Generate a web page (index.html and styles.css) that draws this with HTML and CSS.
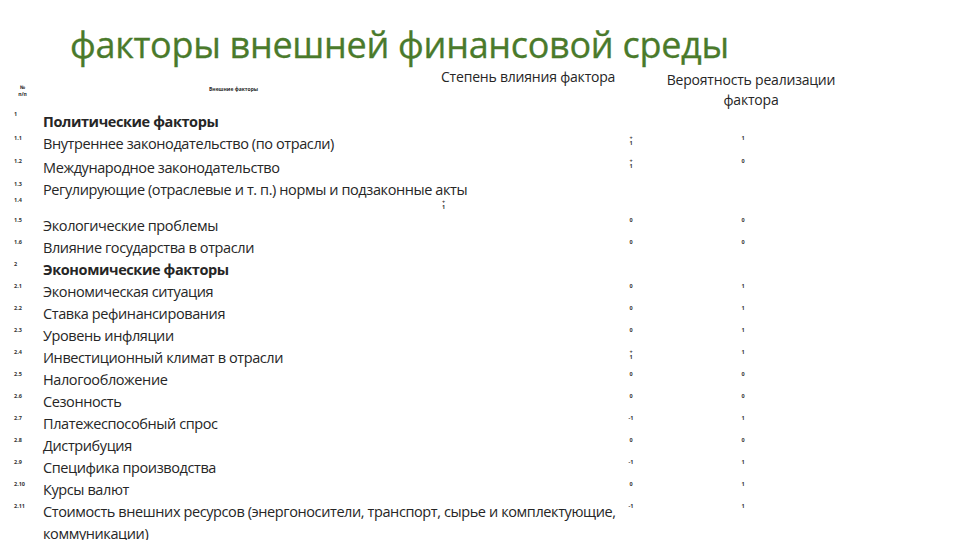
FILE: index.html
```html
<!DOCTYPE html>
<html lang="ru">
<head>
<meta charset="utf-8">
<link rel="stylesheet" href="styles.css">
</head>
<body>
<div class="slide">
  <h1 class="title">факторы внешней финансовой среды</h1>
  <div class="head">
    <div class="h-num">№<br>п/п</div>
    <div class="h-ext">Внешние факторы</div>
    <div class="h-deg">Степень влияния фактора</div>
    <div class="h-prob">Вероятность реализации<br>фактора</div>
  </div>
  <div class="grid">
    <div class="nums">
      <div class="n r24">1</div>
      <div class="n r23">1.1</div>
      <div class="n r23">1.2</div>
      <div class="n r16">1.3</div>
      <div class="n r20">1.4</div>
      <div class="n">1.5</div>
      <div class="n">1.6</div>
      <div class="n">2</div>
      <div class="n">2.1</div>
      <div class="n">2.2</div>
      <div class="n">2.3</div>
      <div class="n">2.4</div>
      <div class="n">2.5</div>
      <div class="n">2.6</div>
      <div class="n">2.7</div>
      <div class="n">2.8</div>
      <div class="n">2.9</div>
      <div class="n">2.10</div>
      <div class="n">2.11</div>
    </div>
    <div class="texts">
      <div class="t b">Политические факторы</div>
      <div class="t">Внутреннее законодательство (по отрасли)</div>
      <div class="t t-push">Международное законодательство</div>
      <div class="t">Регулирующие (отраслевые и т. п.) нормы и подзаконные акты</div>
      <div class="stray"><span class="stack">+<br>1</span></div>
      <div class="t">Экологические проблемы</div>
      <div class="t">Влияние государства в отрасли</div>
      <div class="t b">Экономические факторы</div>
      <div class="t">Экономическая ситуация</div>
      <div class="t">Ставка рефинансирования</div>
      <div class="t">Уровень инфляции</div>
      <div class="t">Инвестиционный климат в отрасли</div>
      <div class="t">Налогообложение</div>
      <div class="t">Сезонность</div>
      <div class="t">Платежеспособный спрос</div>
      <div class="t">Дистрибуция</div>
      <div class="t">Специфика производства</div>
      <div class="t">Курсы валют</div>
      <div class="t">Стоимость внешних ресурсов (энергоносители, транспорт, сырье и комплектующие,<br>коммуникации)</div>
    </div>
    <div class="vals col1">
      <div class="n r24"></div>
      <div class="n r23"><span class="stack">+<br>1</span></div>
      <div class="n r23"><span class="stack">+<br>1</span></div>
      <div class="n r16"></div>
      <div class="n r20"></div>
      <div class="n">0</div>
      <div class="n">0</div>
      <div class="n"></div>
      <div class="n">0</div>
      <div class="n">0</div>
      <div class="n">0</div>
      <div class="n"><span class="stack">+<br>1</span></div>
      <div class="n">0</div>
      <div class="n">0</div>
      <div class="n">-1</div>
      <div class="n">0</div>
      <div class="n">-1</div>
      <div class="n">0</div>
      <div class="n">-1</div>
    </div>
    <div class="vals col2">
      <div class="n r24"></div>
      <div class="n r23">1</div>
      <div class="n r23">0</div>
      <div class="n r16"></div>
      <div class="n r20"></div>
      <div class="n">0</div>
      <div class="n">0</div>
      <div class="n"></div>
      <div class="n">1</div>
      <div class="n">1</div>
      <div class="n">1</div>
      <div class="n">1</div>
      <div class="n">0</div>
      <div class="n">0</div>
      <div class="n">1</div>
      <div class="n">0</div>
      <div class="n">1</div>
      <div class="n">1</div>
      <div class="n">1</div>
    </div>
  </div>
</div>
</body>
</html>
```

FILE: styles.css
```css
* { box-sizing: border-box; }
html, body { margin: 0; padding: 0; background: #ffffff; }
body { font-family: "Open Sans", "Liberation Sans", sans-serif; color: #262626; }
.slide { width: 960px; height: 540px; overflow: hidden; position: relative; background: #fff; }
.title {
  margin: 0;
  padding: 21px 0 0 70px;
  height: 70px;
  font-weight: 400;
  font-size: 36px;
  line-height: 48px;
  color: #4a7a2b;
  letter-spacing: -0.3px;
  white-space: nowrap;
  -webkit-text-stroke: 0.3px #4a7a2b;
}
.head { display: flex; height: 38px; }
.h-num { padding: 14px 0 0 12px; font-size: 5px; line-height: 7px; font-weight: 700; text-align: center; width: 33px; }
.h-ext { width: 408px; padding: 16px 0 0 176px; font-size: 5px; font-weight: 700; line-height: 7px; white-space: nowrap; }
.h-deg { width: 208px; font-size: 14px; line-height: 18px; letter-spacing: -0.2px; white-space: nowrap; margin-top: -2px; }
.h-prob { width: 204px; text-align: center; font-size: 14px; line-height: 20px; letter-spacing: -0.2px; }
.grid { display: flex; }
.nums { width: 43px; padding-left: 14px; padding-top: 3px; }
.n { height: 22px; font-size: 5.5px; line-height: 7px; font-weight: 700; color: #333; }
.r24 { height: 24px; }
.r23 { height: 23px; }
.r16 { height: 16px; }
.r20 { height: 20px; }
.texts { width: 576px; padding-top: 3px; }
.t { font-size: 14.5px; line-height: 22px; letter-spacing: -0.4px; white-space: nowrap; }
.t-push { margin-top: 2px; }
.b { font-weight: 700; }
.stray { display: flex; align-items: flex-start; height: 14px; padding-left: 399px; }
.stray .stack { margin-top: -2px; }
.stack { display: inline-block; vertical-align: top; font-size: 5.5px; line-height: 5px; font-weight: 700; text-align: center; color: #333; padding-top: 1px; }
.vals { text-align: center; padding-top: 3px; }
.col1 { width: 24px; }
.col2 { width: 200px; }
```
